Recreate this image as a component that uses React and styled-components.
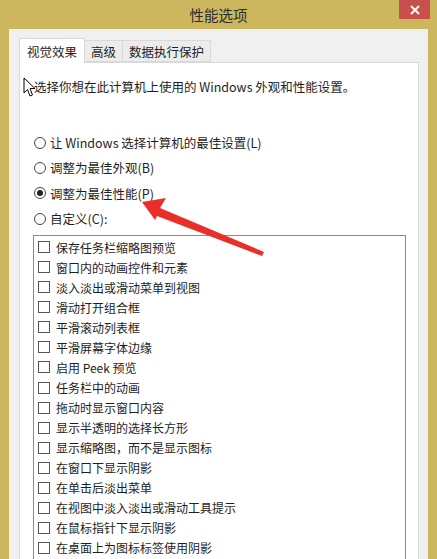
import React from "react";
import styled, { createGlobalStyle } from "styled-components";

const GlobalStyle = createGlobalStyle`
  html, body {
    margin: 0;
    padding: 0;
    overflow: hidden;
    background: #cdb75e;
  }
  * { box-sizing: border-box; }
`;

const font = `"Noto Sans CJK SC", "Noto Sans", "Liberation Sans", sans-serif`;

const effects = [
  "保存任务栏缩略图预览",
  "窗口内的动画控件和元素",
  "淡入淡出或滑动菜单到视图",
  "滑动打开组合框",
  "平滑滚动列表框",
  "平滑屏幕字体边缘",
  "启用 Peek 预览",
  "任务栏中的动画",
  "拖动时显示窗口内容",
  "显示半透明的选择长方形",
  "显示缩略图，而不是显示图标",
  "在窗口下显示阴影",
  "在单击后淡出菜单",
  "在视图中淡入淡出或滑动工具提示",
  "在鼠标指针下显示阴影",
  "在桌面上为图标标签使用阴影",
];

const options = [
  { label: "让 Windows 选择计算机的最佳设置(L)", checked: false },
  { label: "调整为最佳外观(B)", checked: false },
  { label: "调整为最佳性能(P)", checked: true },
  { label: "自定义(C):", checked: false },
];

export default function App() {
  return (
    <>
      <GlobalStyle />
      <Frame>
        <TitleBar>
          <Title>性能选项</Title>
          <CloseButton>
            <svg width="10" height="10" viewBox="0 0 10 10">
              <path d="M1 1 L9 9 M9 1 L1 9" stroke="#fff" strokeWidth="1.8" />
            </svg>
          </CloseButton>
        </TitleBar>
        <Client>
          <Tabs>
            <Tab $active>视觉效果</Tab>
            <Tab>高级</Tab>
            <Tab>数据执行保护</Tab>
          </Tabs>
          <Panel>
            <Description>
              选择你想在此计算机上使用的 Windows 外观和性能设置。
              <Cursor width="13" height="21" viewBox="0 0 13 21">
                <path
                  d="M1 1 L1 16 L4.5 12.5 L7 19 L9.5 18 L7 11.5 L12 11.5 Z"
                  fill="#fff"
                  stroke="#000"
                  strokeWidth="1"
                  strokeLinejoin="round"
                />
              </Cursor>
            </Description>
            <RadioGroup>
              {options.map((o) => (
                <RadioRow key={o.label}>
                  <RadioCircle $checked={o.checked} />
                  {o.label}
                </RadioRow>
              ))}
            </RadioGroup>
            <ListBox>
              {effects.map((e, i) => (
                <CheckRow key={i}>
                  <CheckBox />
                  {e}
                </CheckRow>
              ))}
            </ListBox>
            <Arrow width="140" height="70" viewBox="0 0 140 70">
              <path
                d="M0 4 L24 0 L18 10 L122 54 L120 58 L15 18 L13 22 Z"
                fill="#ea2f2a"
              />
            </Arrow>
          </Panel>
        </Client>
      </Frame>
    </>
  );
}

const Frame = styled.div`
  width: 437px;
  height: 559px;
  overflow: hidden;
  background: #cdb75e;
  padding: 0 9px;
  display: flex;
  flex-direction: column;
  font-family: ${font};
`;

const TitleBar = styled.div`
  position: relative;
  height: 29px;
  flex-shrink: 0;
  display: flex;
  align-items: center;
  justify-content: center;
`;

const Title = styled.div`
  font-size: 14.5px;
  color: #2b2b2b;
  padding-bottom: 1px;
`;

const CloseButton = styled.div`
  position: absolute;
  top: 0;
  right: -2px;
  width: 31px;
  height: 19px;
  background: #c7504a;
  display: flex;
  align-items: center;
  justify-content: center;
`;

const Client = styled.div`
  flex: 1;
  min-height: 0;
  background: #f0f0f0;
  padding: 9px 9px 0 10px;
  display: flex;
  flex-direction: column;
`;

const Tabs = styled.div`
  display: flex;
  align-items: flex-end;
  height: 24px;
  flex-shrink: 0;
  position: relative;
  z-index: 1;
`;

const Tab = styled.div`
  height: ${(p) => (p.$active ? "25px" : "22px")};
  margin-bottom: ${(p) => (p.$active ? "-1px" : "0")};
  padding: 0 ${(p) => (p.$active ? "7px" : "6px")};
  display: flex;
  align-items: center;
  font-size: 12.5px;
  color: #1e1e1e;
  background: ${(p) => (p.$active ? "#ffffff" : "#ececec")};
  border: 1px solid #d9d9d9;
  border-bottom: ${(p) => (p.$active ? "none" : "1px solid #d9d9d9")};
  margin-left: ${(p) => (p.$active ? "0" : "-1px")};
`;

const Panel = styled.div`
  position: relative;
  flex: 1;
  min-height: 0;
  background: #fff;
  border: 1px solid #d9d9d9;
  border-bottom: none;
  padding: 16px 13px 0 13px;
  display: flex;
  flex-direction: column;
`;

const Description = styled.div`
  position: relative;
  font-size: 12.5px;
  color: #1e1e1e;
  padding-left: 1px;
  line-height: 16px;
`;

const Cursor = styled.svg`
  position: absolute;
  left: -10px;
  top: -2px;
`;

const RadioGroup = styled.div`
  margin-top: 38px;
  display: flex;
  flex-direction: column;
  gap: 6px;
`;

const RadioRow = styled.div`
  display: flex;
  align-items: center;
  gap: 4px;
  height: 19.3px;
  font-size: 12.5px;
  color: #1e1e1e;
  padding-left: 1px;
`;

const RadioCircle = styled.span`
  width: 12px;
  height: 12px;
  border-radius: 50%;
  border: 1px solid #444;
  background: #fff;
  display: flex;
  align-items: center;
  justify-content: center;
  &::after {
    content: "";
    width: 6px;
    height: 6px;
    border-radius: 50%;
    background: #222;
    display: ${(p) => (p.$checked ? "block" : "none")};
  }
`;

const ListBox = styled.div`
  margin-top: 7px;
  width: 373px;
  flex: 1;
  min-height: 0;
  border: 1px solid #8a8a8a;
  border-bottom: none;
  padding: 1px 0 0 4px;
  overflow: hidden;
`;

const CheckRow = styled.div`
  height: 20.05px;
  display: flex;
  align-items: center;
  gap: 6px;
  font-size: 12px;
  color: #1e1e1e;
`;

const CheckBox = styled.span`
  width: 12px;
  height: 12px;
  border: 1px solid #555;
  background: #fff;
  flex-shrink: 0;
`;

const Arrow = styled.svg`
  position: absolute;
  left: 122px;
  top: 135px;
`;
